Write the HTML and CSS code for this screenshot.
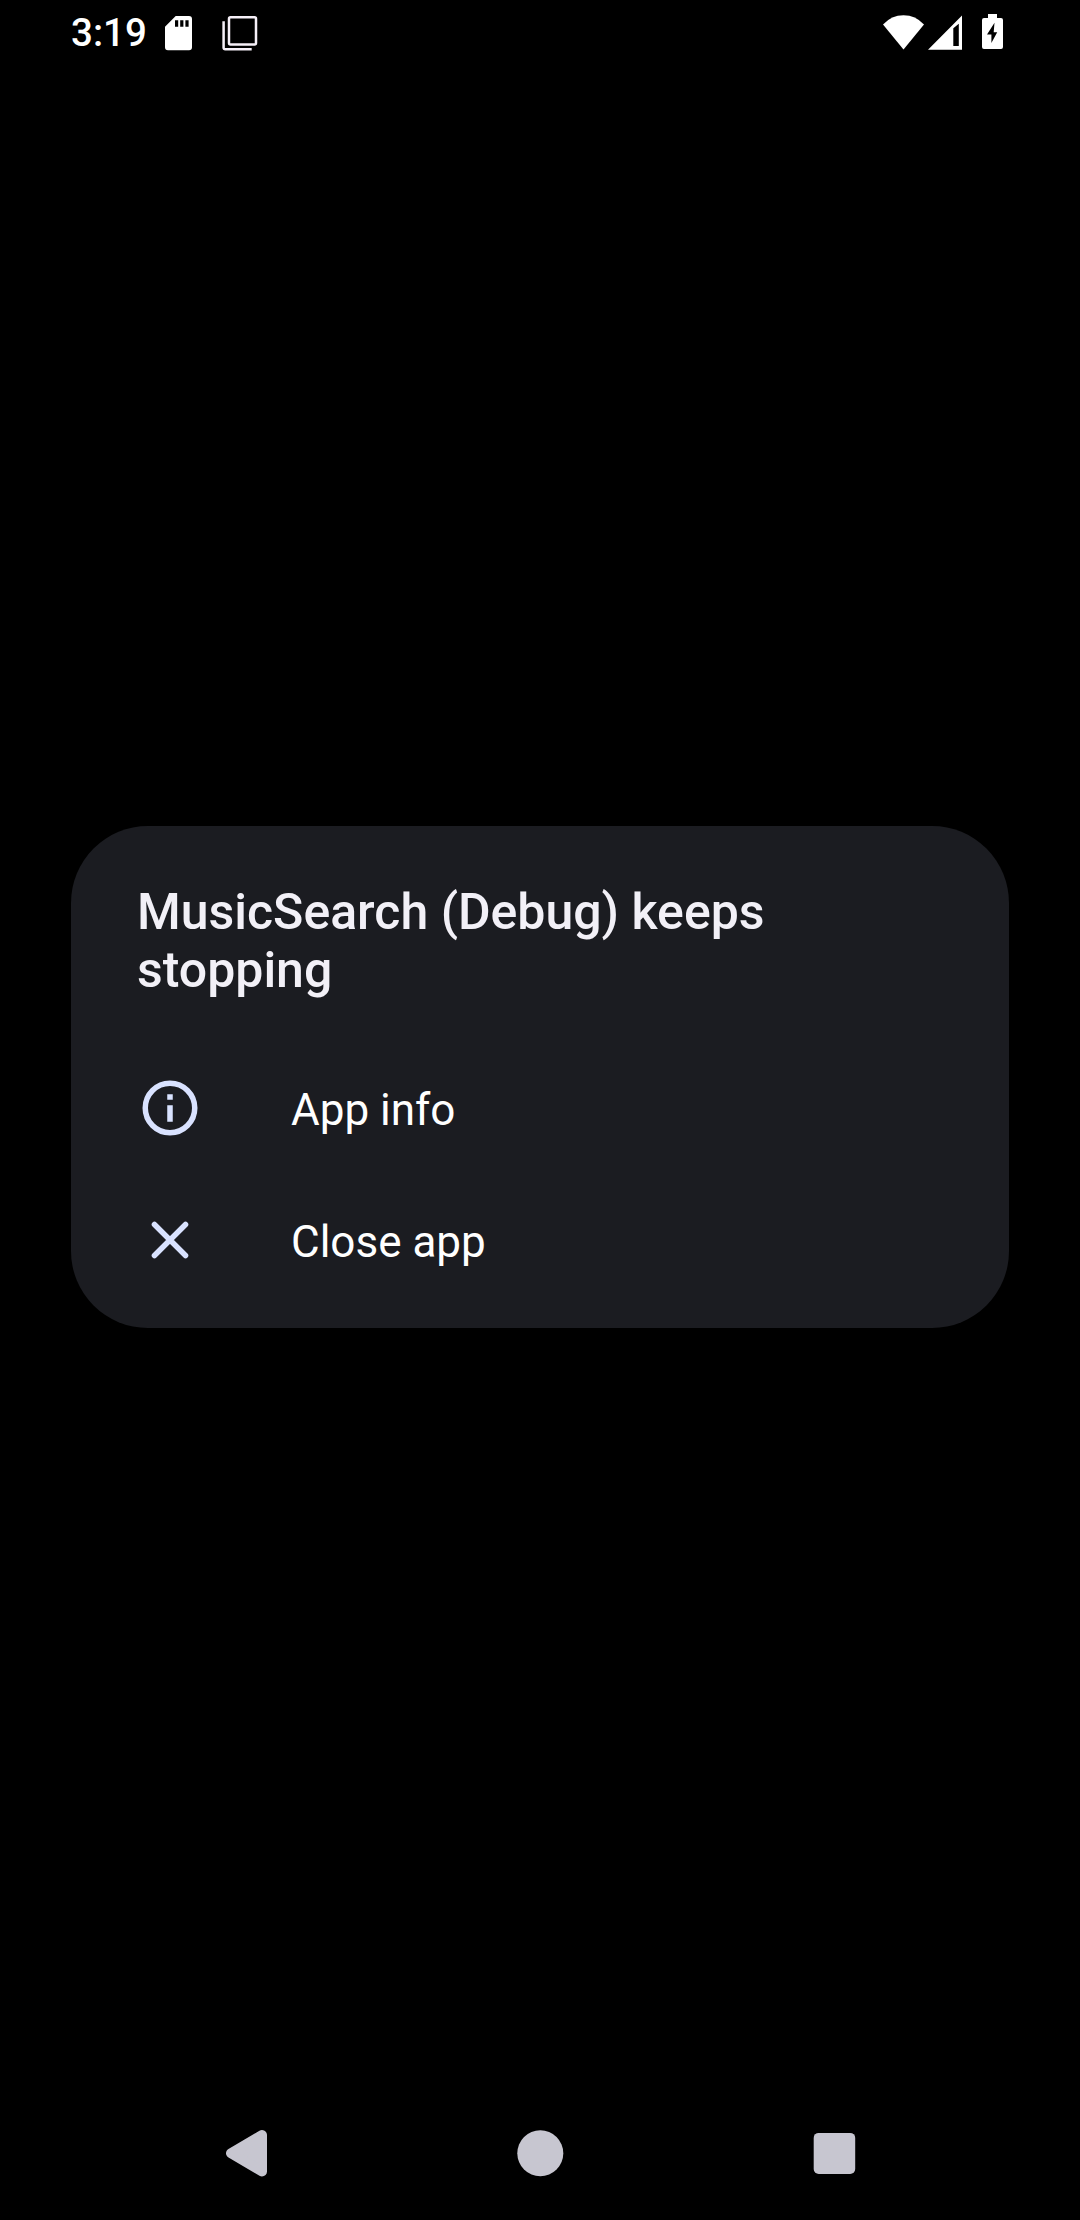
FILE: index.html
```html
<!DOCTYPE html>
<html lang="en">
<head>
<meta charset="utf-8">
<title>MusicSearch</title>
<link rel="stylesheet" href="styles.css">
</head>
<body>
<div class="screen">
  <header class="status">
    <span class="time">3:19</span>
    <svg class="sd" width="27" height="35" viewBox="0 0 27 35"><path fill="#fff" fill-rule="evenodd" d="M10.7 0H24a3 3 0 0 1 3 3V31.3a3 3 0 0 1-3 3H3a3 3 0 0 1-3-3V10.7ZM10 4.3V10.7H13.2V4.3ZM15.2 4.3V10.7H18.4V4.3ZM20.4 4.3V10.7H23.6V4.3Z"/></svg>
    <svg class="copy" width="36" height="36" viewBox="0 0 36 36" fill="none" stroke="#f6f0f8" stroke-width="2.5"><rect x="7" y="1.3" width="27" height="27.2" rx="1.5"/><path d="M1.6 5.2V31.7a1.5 1.5 0 0 0 1.5 1.5H29.7"/></svg>
    <span class="spacer"></span>
    <svg class="wifi" width="41" height="35" viewBox="0 0 41 35"><path fill="#fff" d="M0 9.5Q8.5 .3 20.5 .3T41 9.5L20.5 34.5Z"/></svg>
    <svg class="signal" width="35" height="35" viewBox="0 0 35 35"><path fill="#fff" fill-rule="evenodd" d="M0 34.8 34 .4V34.8ZM25.3 13.3V31H30.8V8.8Z"/></svg>
    <svg class="battery" width="21" height="35" viewBox="0 0 21 35"><path fill="#fff" fill-rule="evenodd" d="M6 0H15V4H19a2 2 0 0 1 2 2V33a2 2 0 0 1-2 2H2a2 2 0 0 1-2-2V6a2 2 0 0 1 2-2H6ZM12.5 8.7 5 20.5H9.4V29L15.2 18.3H11.7Z"/></svg>
  </header>
  <main class="stage">
    <section class="dialog">
      <h1 class="title">MusicSearch (Debug) keeps stopping</h1>
      <button class="action">
        <svg width="66" height="66" viewBox="0 0 24 24"><circle cx="12" cy="12" r="9" fill="none" stroke="#d9e2ff" stroke-width="2"/><path fill="#d9e2ff" d="M11 7h2v2h-2zM11 11h2v6h-2z"/></svg>
        <span class="label">App info</span>
      </button>
      <button class="action">
        <svg width="66" height="66" viewBox="0 0 24 24"><path d="M6.35 6.35 17.65 17.65M17.65 6.35 6.35 17.65" stroke="#d9e2ff" stroke-width="2" stroke-linecap="round"/></svg>
        <span class="label">Close app</span>
      </button>
    </section>
  </main>
  <nav class="navbar">
    <svg width="48" height="48" viewBox="0 0 48 48"><path fill="#c7c6d0" stroke="#c7c6d0" stroke-width="10" stroke-linejoin="round" d="M9 24.3 40 6V42.4Z"/></svg>
    <svg width="48" height="48" viewBox="0 0 48 48"><circle cx="24.3" cy="24.3" r="23" fill="#c7c6d0"/></svg>
    <svg width="48" height="48" viewBox="0 0 48 48"><rect x="3.7" y="3.9" width="41.5" height="41" rx="5" fill="#c7c6d0"/></svg>
  </nav>
</div>
</body>
</html>
```
FILE: styles.css
```css
body {
  margin: 0;
  background: #000;
  font-family: Roboto, sans-serif;
}
.screen {
  display: flex;
  flex-direction: column;
  width: 1080px;
  height: 2220px;
  overflow: hidden;
}
.status {
  display: flex;
  height: 66px;
  box-sizing: border-box;
  padding: 14px 77px 0 71px;
}
.status svg {
  flex: none;
}
.time {
  width: 94px;
  margin-top: -4px;
  color: #fff;
  font-size: 38.5px;
  font-weight: 500;
  line-height: 45px;
}
.sd {
  margin-top: 2px;
}
.copy {
  margin: 2px 0 0 30px;
}
.spacer {
  flex: 1;
}
.wifi {
  margin: 1px 4px 0 0;
}
.signal {
  margin: 1px 19px 0 0;
}
.stage {
  flex: 1;
  padding: 760px 71px 0;
}
.dialog {
  box-sizing: border-box;
  height: 502px;
  padding: 57px 0 22px;
  border-radius: 77px;
  background: #1b1c21;
}
.title {
  margin: 0 66px 43px;
  color: #f2f0f7;
  font-size: 50px;
  font-weight: 500;
  line-height: 58px;
}
.action {
  display: flex;
  align-items: center;
  gap: 88px;
  width: 100%;
  height: 132px;
  padding: 0 66px;
  border: 0;
  background: none;
  color: #fff;
  font: 400 44px/52px Roboto, sans-serif;
}
.label {
  padding-top: 3px;
}
.navbar {
  display: flex;
  align-items: center;
  justify-content: center;
  gap: 246px;
  height: 132px;
  box-sizing: border-box;
  padding-bottom: 2px;
}
```
